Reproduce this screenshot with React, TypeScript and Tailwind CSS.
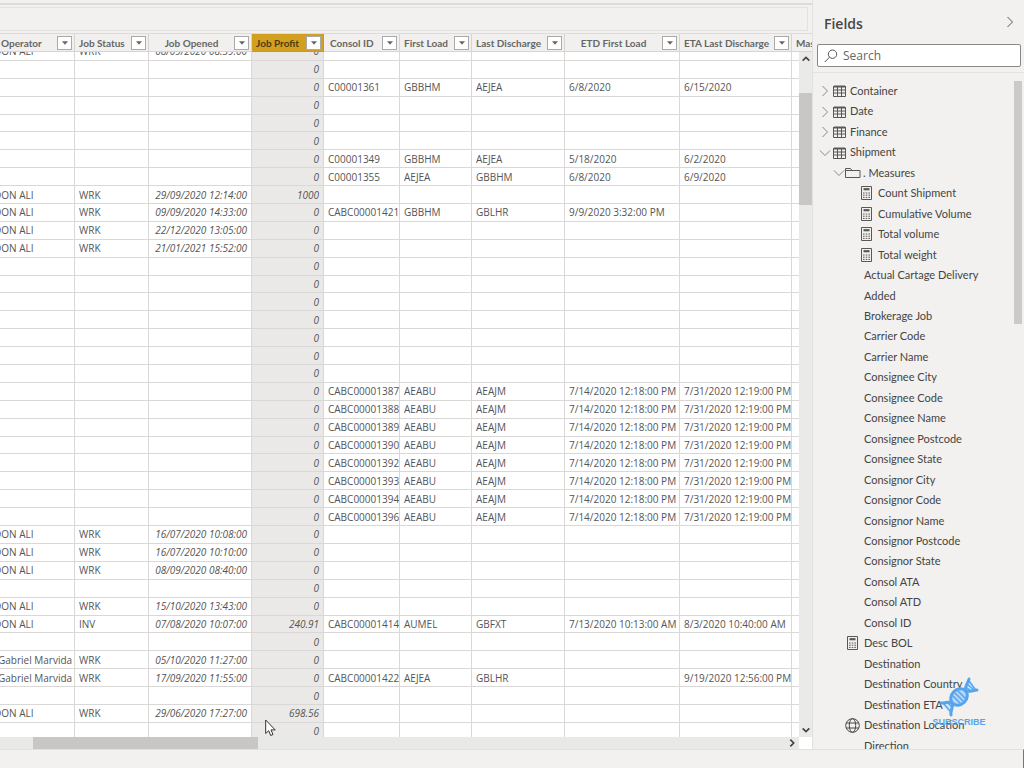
import React from "react";

type Row = string[];

const EMPTY: Row = ["", "", "", "0"];

const load = (id: string): Row => [
  "", "", "", "0", id, "AEABU", "AEAJM", "7/14/2020 12:18:00 PM", "7/31/2020 12:19:00 PM",
];

const job = (opened: string, profit = "0", status = "WRK", rest: Row = []): Row => [
  "DON ALI", status, opened, profit, ...rest,
];

const rows: Row[] = [
  job("08/09/2020 08:39:00"),
  EMPTY,
  ["", "", "", "0", "C00001361", "GBBHM", "AEJEA", "6/8/2020", "6/15/2020"],
  EMPTY,
  EMPTY,
  EMPTY,
  ["", "", "", "0", "C00001349", "GBBHM", "AEJEA", "5/18/2020", "6/2/2020"],
  ["", "", "", "0", "C00001355", "AEJEA", "GBBHM", "6/8/2020", "6/9/2020"],
  job("29/09/2020 12:14:00", "1000"),
  job("09/09/2020 14:33:00", "0", "WRK", ["CABC00001421", "GBBHM", "GBLHR", "9/9/2020 3:32:00 PM"]),
  job("22/12/2020 13:05:00"),
  job("21/01/2021 15:52:00"),
  EMPTY,
  EMPTY,
  EMPTY,
  EMPTY,
  EMPTY,
  EMPTY,
  EMPTY,
  load("CABC00001387"),
  load("CABC00001388"),
  load("CABC00001389"),
  load("CABC00001390"),
  load("CABC00001392"),
  load("CABC00001393"),
  load("CABC00001394"),
  load("CABC00001396"),
  job("16/07/2020 10:08:00"),
  job("16/07/2020 10:10:00"),
  job("08/09/2020 08:40:00"),
  EMPTY,
  job("15/10/2020 13:43:00"),
  job("07/08/2020 10:07:00", "240.91", "INV", [
    "CABC00001414", "AUMEL", "GBFXT", "7/13/2020 10:13:00 AM", "8/3/2020 10:40:00 AM",
  ]),
  EMPTY,
  ["Gabriel Marvida", "WRK", "05/10/2020 11:27:00", "0"],
  ["Gabriel Marvida", "WRK", "17/09/2020 11:55:00", "0", "CABC00001422", "AEJEA", "GBLHR", "", "9/19/2020 12:56:00 PM"],
  EMPTY,
  job("29/06/2020 17:27:00", "698.56"),
  EMPTY,
];

const headers = [
  { label: "Operator", className: "pl-px text-left" },
  { label: "Job Status", className: "pl-1 text-left" },
  { label: "Job Opened", className: "text-center" },
  { label: "Job Profit", className: "pl-1 text-left" },
  { label: "Consol ID", className: "pl-1.5 text-left" },
  { label: "First Load", className: "pl-1 text-left" },
  { label: "Last Discharge", className: "pl-1 text-left" },
  { label: "ETD First Load", className: "text-center" },
  { label: "ETA Last Discharge", className: "pl-1 text-left" },
];

const Columns = () => (
  <colgroup>
    <col className="w-[75px]" />
    <col className="w-[74px]" />
    <col className="w-[103px]" />
    <col className="w-[72px]" />
    <col className="w-[76px]" />
    <col className="w-[72px]" />
    <col className="w-[93px]" />
    <col className="w-[115px]" />
    <col className="w-[112px]" />
    <col />
  </colgroup>
);

interface ChevronProps {
  d: string;
  className: string;
  width?: number;
}

const Chevron = ({ d, className, width = 1 }: ChevronProps) => (
  <svg viewBox="0 0 12 12" className={className} fill="none" stroke="currentColor" strokeWidth={width}>
    <path d={d} />
  </svg>
);

const RIGHT = "M3.5 1 8.5 6l-5 5";
const DOWN = "M1 3.5 6 8.5l5-5";
const UP = "M2 8l4-4 4 4";

const TableIcon = () => (
  <svg viewBox="0 0 13 12" className="h-3 w-[13px]" fill="none" stroke="#5a5856">
    <path d="M1 1.5h11" strokeWidth="2" />
    <path d="M.5 1v10.500h12V1M.5 5h12M.5 8h12M4.500 2v9.500M8.500 2v9.500" />
  </svg>
);

const FolderIcon = () => (
  <svg viewBox="0 0 16 12" className="h-3 w-4" fill="none" stroke="#5a5856">
    <path d="M.5 10.5v-9h5l1.500 2h8v7zM.5 3.500H7" />
  </svg>
);

const CalculatorIcon = () => (
  <svg viewBox="0 0 11 14" className="h-3.5 w-[11px]" fill="none" stroke="#5a5856">
    <path d="M.5.5h10v13H.5z" />
    <path d="M2.5 3.2h6" strokeWidth="2.2" />
    <path d="M2 7h7M2 9.2h7M2 11.4h7" strokeDasharray="1.6 1.1" />
  </svg>
);

const GlobeIcon = () => (
  <svg viewBox="0 0 15 15" className="size-[15px]" fill="none" stroke="#4a4846">
    <circle cx="7.5" cy="7.5" r="6.8" />
    <ellipse cx="7.5" cy="7.5" rx="3.2" ry="6.8" />
    <path d="M1.2 5h12.6M1.2 10h12.6" />
  </svg>
);

const DataGrid = () => (
  <div className="flex min-h-0 flex-1 flex-col text-[10px] leading-[12px] text-[#555]">
    <table className="w-full table-fixed border-separate border-spacing-0">
      <Columns />
      <thead>
        <tr className="h-[18px]">
          {headers.map((h) => (
            <th
              key={h.label}
              className={
                h.label === "Job Profit"
                  ? "border-r border-b border-[#c99b1d] bg-[#d2a01e] p-0 text-[#4b3c12]"
                  : "border-r border-b border-[#d6d5d3] bg-[#f1f0ee] p-0 text-[#666]"
              }
            >
              <div className="flex items-center pr-0.5">
                <span className={`min-w-0 flex-1 whitespace-nowrap font-bold ${h.className}`}>{h.label}</span>
                <button
                  type="button"
                  aria-label={`Filter ${h.label}`}
                  className="flex h-3.5 w-[15px] shrink-0 items-center justify-center border border-[#aaa] bg-white"
                >
                  <svg viewBox="0 0 6 4" className="h-1 w-1.5" fill="#666">
                    <path d="M0 .3h6L3 3.7z" />
                  </svg>
                </button>
              </div>
            </th>
          ))}
          <th className="overflow-hidden border-b border-[#d6d5d3] p-0 pl-1 text-left font-bold whitespace-nowrap text-[#666]">
            Master
          </th>
        </tr>
      </thead>
    </table>

    <div className="flex min-h-0 flex-1">
      <div className="min-w-0 flex-1 overflow-hidden bg-white font-['Open_Sans',sans-serif]">
        <table className="-mt-[9px] h-[698px] w-full table-fixed border-separate border-spacing-0">
          <Columns />
          <tbody>
            {rows.map((row, i) => (
              <tr key={i}>
                {headers.map((h, c) => {
                  let style = "pl-1";
                  if (c === 0) style = row[0] === "DON ALI" ? "[&>span]:-ml-1.5" : "[&>span]:-ml-0.5";
                  if (c === 2) style = "pr-1 text-right italic";
                  if (c === 3) style = "bg-[#eae9e7] pr-1 text-right italic";
                  return (
                    <td
                      key={h.label}
                      className={`overflow-hidden border-r border-b border-[#d9d8d7] p-0 whitespace-nowrap ${style}`}
                    >
                      <span>{row[c]}</span>
                    </td>
                  );
                })}
                <td className="border-b border-[#d9d8d7] p-0" />
              </tr>
            ))}
          </tbody>
        </table>
      </div>
      <div className="flex w-[13px] flex-col items-center bg-[#eaeae9] text-[#444]">
        <Chevron d={UP} width={2} className="mt-0.5 size-2.5" />
        <div className="mt-[29px] h-[112px] w-[13px] bg-[#c8c7c6]" />
        <Chevron d="M2 4l4 4 4-4" width={2} className="mt-auto mb-0.5 size-2.5" />
      </div>
    </div>

    <div className="flex h-3 shrink-0">
      <div className="flex flex-1 items-center bg-[#e9e9e8] text-[#444]">
        <div className="ml-[33px] h-3 w-[225px] bg-[#c8c7c6]" />
        <Chevron d="M4 2l4 4-4 4" width={2} className="mr-0.5 ml-auto size-2.5" />
      </div>
      <div className="w-[13px] bg-white" />
    </div>
  </div>
);

const tables = ["Container", "Date", "Finance"];
const measures = ["Count Shipment", "Cumulative Volume", "Total volume", "Total weight"];
const fields = [
  "Actual Cartage Delivery", "Added", "Brokerage Job", "Carrier Code", "Carrier Name",
  "Consignee City", "Consignee Code", "Consignee Name", "Consignee Postcode", "Consignee State",
  "Consignor City", "Consignor Code", "Consignor Name", "Consignor Postcode", "Consignor State",
  "Consol ATA", "Consol ATD", "Consol ID", "Desc BOL", "Destination", "Destination Country",
  "Destination ETA", "Destination Location", "Direction",
];

const FieldsPane = () => (
  <aside className="flex w-[212px] shrink-0 flex-col border-l border-[#e2e1df] text-[11px] text-[#444]">
    <div className="flex h-11 shrink-0 items-center justify-between pr-2 pl-[11px]">
      <h2 className="pt-1 font-['Open_Sans',sans-serif] text-sm font-semibold text-[#484644]">Fields</h2>
      <button type="button" aria-label="Collapse pane" className="text-[#555]">
        <Chevron d={RIGHT} className="size-3" />
      </button>
    </div>
    <label className="mr-[3px] ml-1 flex h-[23px] shrink-0 items-center rounded-xs border border-[#888] bg-white pl-1.5 text-[#555]">
      <svg viewBox="0 0 14 14" className="size-3.5" fill="none" stroke="currentColor">
        <circle cx="8.5" cy="5.2" r="4.2" />
        <path d="M5.5 8.2.8 13" />
      </svg>
      <input
        type="text"
        aria-label="Search"
        placeholder="Search"
        className="ml-[5px] min-w-0 flex-1 bg-transparent font-['Open_Sans',sans-serif] text-xs outline-none placeholder:text-[#666]"
      />
    </label>
    <div className="mt-[5px] flex min-h-0 flex-1 border-t border-[#e2e1df] pt-2">
      <div className="min-w-0 flex-1 overflow-hidden">
        <ul className="grid h-[675px] auto-rows-fr">
          {tables.map((name) => (
            <li key={name} className="flex items-center">
              <button type="button" className="flex items-center pl-1.5">
                <Chevron d={RIGHT} className="size-3 text-[#888]" />
                <span className="mr-1 ml-0.5"><TableIcon /></span>
                {name}
              </button>
            </li>
          ))}
          <li className="flex items-center">
            <button type="button" className="flex items-center pl-1.5">
              <Chevron d={DOWN} className="size-3 text-[#888]" />
              <span className="mr-1 ml-0.5"><TableIcon /></span>
              Shipment
            </button>
          </li>
          <li className="flex items-center">
            <button type="button" className="flex items-center pl-5">
              <Chevron d={DOWN} className="size-3 text-[#888]" />
              <span className="mr-0.5"><FolderIcon /></span>
              . Measures
            </button>
          </li>
          {measures.map((name) => (
            <li key={name} className="flex items-center gap-1.5 pl-12">
              <CalculatorIcon />
              {name}
            </li>
          ))}
          {fields.map((name) => (
            <li key={name} className="flex items-center pl-8 whitespace-nowrap">
              <span className="flex w-[19px] shrink-0 items-center pl-0.5">
                {name === "Desc BOL" && <CalculatorIcon />}
                {name === "Destination Location" && <span className="-ml-0.5"><GlobeIcon /></span>}
              </span>
              {name}
            </li>
          ))}
        </ul>
      </div>
      <div className="mr-0.5 h-[243px] w-2 bg-[#cbcac9]" />
    </div>
  </aside>
);

const SubscribeBadge = () => (
  <div className="absolute right-[38px] bottom-[41px] flex w-[54px] flex-col items-center">
    <svg viewBox="0 0 40 40" className="size-10" fill="none" stroke="#55a5ee" strokeLinecap="round">
      <ellipse cx="20" cy="20" rx="9" ry="7.5" transform="rotate(-45 20 20)" fill="#b4d7f8" strokeWidth="3" />
      <path d="M2 26C7 26 11 24 13 26 15 29 11 34 12 38" fill="#d5e7f8" strokeWidth="3" />
      <path d="M30 2C29 6 25 11 27 13 29 16 34 13 38 13" fill="#d5e7f8" strokeWidth="3" />
      <path
        d="M5 27l7 8M9 26l4 4M14 19l7 7M16 16l8 8M19 14l7 7M27 10l5 4M28 7l7 6M30 4l6 8"
        strokeWidth="1.5"
      />
    </svg>
    <span className="font-['Liberation_Sans',sans-serif] text-[9px] leading-[10px] font-black text-[#55a5ee]">
      SUBSCRIBE
    </span>
  </div>
);

const MousePointer = () => (
  <svg viewBox="0 0 12 18" className="absolute top-[719px] left-[265px] h-[18px] w-3" fill="#fff" stroke="#333">
    <path d="M.7 1v13.5l3-2.8 2 4.8 2.3-1-2-4.6h4.2z" />
  </svg>
);

const App = () => {
  return (
    <div className="relative flex h-screen flex-col overflow-hidden bg-[#f2f1ef] font-['Lato','Open_Sans',sans-serif]">
      <div className="flex min-h-0 flex-1">
        <main className="flex min-w-0 flex-1 flex-col pt-[3px]">
          <div className="h-1 shrink-0 border-t-2 border-[#dddcda]" />
          <div className="mr-1 h-6 shrink-0 border-y border-r border-[#e3e2e0]" />
          <div className="h-[3px] shrink-0 border-b border-[#dcdbd9]" />
          <DataGrid />
        </main>
        <FieldsPane />
      </div>
      <footer className="h-[19px] shrink-0 border-t border-r border-t-[#e2e1df] border-r-[#777]" />
      <MousePointer />
      <SubscribeBadge />
    </div>
  );
};

export default App;
